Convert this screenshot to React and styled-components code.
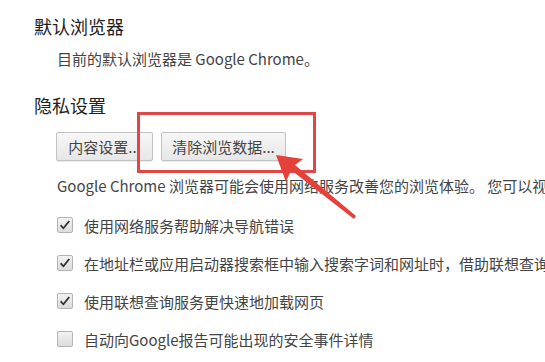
import styled, { createGlobalStyle } from 'styled-components';

const GlobalStyle = createGlobalStyle`
  html, body {
    margin: 0;
    padding: 0;
    background: #fff;
  }
  body {
    font-family: "Noto Sans CJK SC", "Noto Sans", sans-serif;
    color: #333;
  }
`;

const Page = styled.div`
  position: relative;
  width: 545px;
  height: 362px;
  overflow: hidden;
  padding: 14px 0 0 34px;
  box-sizing: border-box;
`;

const Section = styled.section`
  display: flex;
  flex-direction: column;
  margin-top: ${(p) => p.$mt || 0}px;
`;

const Heading = styled.h2`
  margin: 0;
  font-size: 18px;
  font-weight: normal;
  line-height: 24px;
  color: #222;
`;

const Text = styled.p`
  margin: ${(p) => p.$mt || 0}px 0 0 23px;
  font-size: 15px;
  line-height: 20px;
  color: #444;
  white-space: nowrap;
`;

const ButtonRow = styled.div`
  display: flex;
  gap: 8px;
  margin: 15px 0 0 22px;
`;

const Button = styled.button`
  width: ${(p) => p.$w}px;
  height: 29px;
  padding: 0;
  font-family: inherit;
  font-size: 15px;
  color: #444;
  text-align: center;
  white-space: nowrap;
  background: linear-gradient(#f7f7f7, #e6e6e6);
  border: 1px solid #c2c2c2;
  border-radius: 2px;
  box-shadow: 0 1px 0 rgba(0, 0, 0, 0.08);
`;

const CheckList = styled.ul`
  list-style: none;
  margin: 19px 0 0 23px;
  padding: 0;
  display: flex;
  flex-direction: column;
  gap: 18px;
`;

const CheckRow = styled.li`
  display: flex;
  align-items: center;
  gap: 11px;
  height: 20px;
  font-size: 15px;
  color: #444;
  white-space: nowrap;
`;

const Box = styled.span`
  flex: none;
  width: 14px;
  height: 14px;
  border: 1px solid #b4b4b4;
  border-radius: 2px;
  background: linear-gradient(#f2f2f2, #dcdcdc);
  display: flex;
  align-items: center;
  justify-content: center;
`;

const Highlight = styled.div`
  position: absolute;
  left: 137px;
  top: 112px;
  width: 173px;
  height: 55px;
  border: 3px solid #e04848;
`;

const Arrow = styled.svg`
  position: absolute;
  left: 270px;
  top: 148px;
`;

const Check = () => (
  <svg width="12" height="11" viewBox="0 0 12 11">
    <path d="M1 6 L4.5 9.5 L11 1.5 L9.5 0.5 L4.3 7 L2.3 4.6 Z" fill="#333" />
  </svg>
);

const options = [
  { label: '使用网络服务帮助解决导航错误', checked: true },
  { label: '在地址栏或应用启动器搜索框中输入搜索字词和网址时，借助联想查询服务', checked: true },
  { label: '使用联想查询服务更快速地加载网页', checked: true },
  { label: '自动向Google报告可能出现的安全事件详情', checked: false },
];

const App = () => (
  <>
    <GlobalStyle />
    <Page>
      <Section>
        <Heading>默认浏览器</Heading>
        <Text $mt={11}>目前的默认浏览器是 Google Chrome。</Text>
      </Section>
      <Section $mt={24}>
        <Heading>隐私设置</Heading>
        <ButtonRow>
          <Button $w={97}>内容设置...</Button>
          <Button $w={125}>清除浏览数据...</Button>
        </ButtonRow>
        <Text $mt={15}>Google Chrome 浏览器可能会使用网络服务改善您的浏览体验。 您可以视需要停用这些服务。</Text>
        <CheckList>
          {options.map((o) => (
            <CheckRow key={o.label}>
              <Box>{o.checked && <Check />}</Box>
              {o.label}
            </CheckRow>
          ))}
        </CheckList>
      </Section>
      <Highlight />
      <Arrow width="95" height="80" viewBox="0 0 95 80">
        <path d="M6 7 L33 11 L25 17 L86 68 L84 71 L21 22 L16 34 Z" fill="#e5403a" />
      </Arrow>
    </Page>
  </>
);

export default App;
